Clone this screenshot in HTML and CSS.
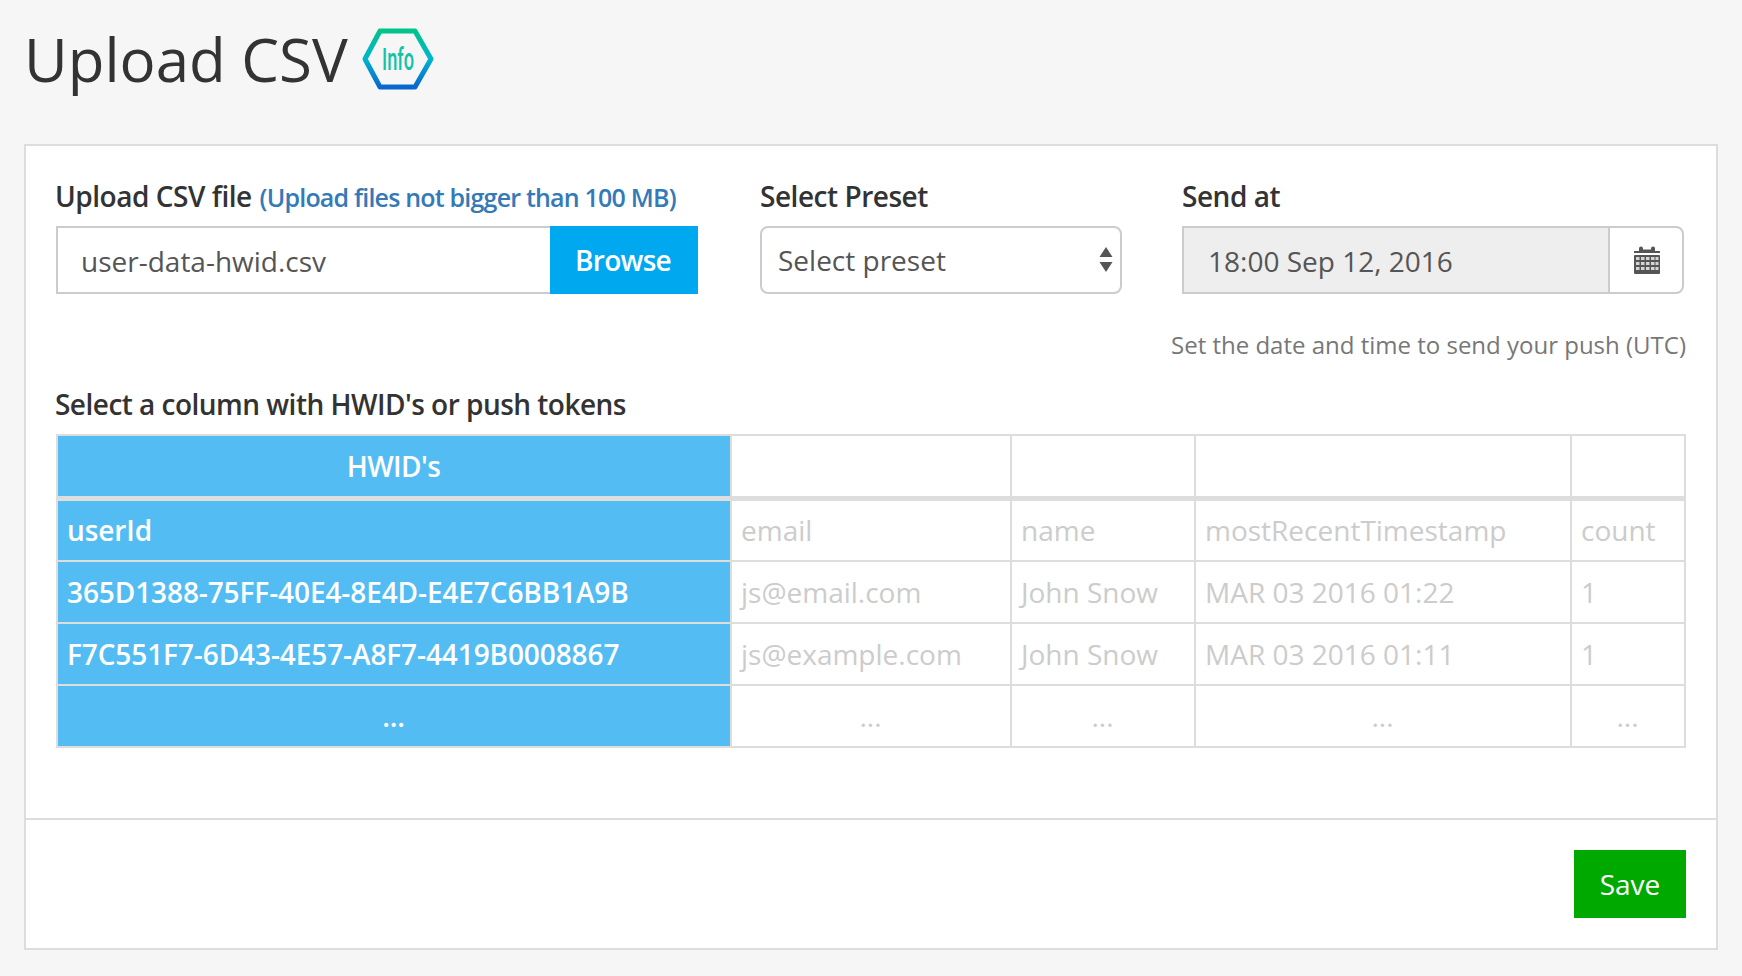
FILE: index.html
```html
<!DOCTYPE html>
<html lang="en">
<head>
<meta charset="utf-8">
<title>Upload CSV</title>
<link rel="stylesheet" href="styles.css">
</head>
<body>
<header class="page-head">
  <h1 class="title">Upload CSV</h1>
  <svg class="info-badge" width="72" height="64" viewBox="0 0 72 64" aria-label="Info">
    <defs>
      <linearGradient id="hex" x1="0" y1="0" x2="0" y2="1">
        <stop offset="0" stop-color="#00c48a"/>
        <stop offset="0.5" stop-color="#00b4cf"/>
        <stop offset="1" stop-color="#0a66cf"/>
      </linearGradient>
    </defs>
    <polygon points="3,32 18,4 53,4 69,32 53,60 18,60" fill="none" stroke="url(#hex)" stroke-width="5" stroke-linejoin="round"/>
    <text class="info-text" x="20" y="43" textLength="32" lengthAdjust="spacingAndGlyphs">Info</text>
  </svg>
</header>

<main class="panel">
  <div class="panel-body">
    <div class="fields">
      <div class="field field-file">
        <div class="label label-tight">Upload CSV file <span class="label-note">(Upload files not bigger than 100 MB)</span></div>
        <div class="file-group">
          <div class="file-name"><span class="nudge">user-data-hwid.csv</span></div>
          <div class="browse">Browse</div>
        </div>
      </div>
      <div class="field field-preset">
        <div class="label">Select Preset</div>
        <div class="select">
          <span>Select preset</span>
          <svg class="select-arrows" width="14" height="26" viewBox="0 0 14 26">
            <polygon points="7,0 13.5,10 .5,10" fill="#555"/>
            <polygon points="0.5,15 13.5,15 7,25" fill="#555"/>
          </svg>
        </div>
      </div>
      <div class="field field-date">
        <div class="label">Send at</div>
        <div class="date-group">
          <div class="date-value"><span class="nudge">18:00 Sep 12, 2016</span></div>
          <div class="date-btn">
            <svg width="26" height="28" viewBox="0 0 26 28">
              <path d="M0 7h5V4.500Q5 2.500 7 2.500Q9 2.500 9 4.500V5.500H17V4.500Q17 2.500 19 2.500Q21 2.500 21 4.500V7H26V9H0Z" fill="#555" transform="translate(0 -2)"/>
              <rect y="9" width="26" height="19" rx="1" fill="#555"/>
              <g class="cal-dots">
                <rect x="2" y="11" width="3.500" height="3"/><rect x="7" y="11" width="3.500" height="3"/><rect x="12" y="11" width="3.500" height="3"/><rect x="17" y="11" width="3.500" height="3"/><rect x="21.500" y="11" width="3" height="3"/>
                <rect x="2" y="16" width="3.500" height="3"/><rect x="7" y="16" width="3.500" height="3"/><rect x="12" y="16" width="3.500" height="3"/><rect x="17" y="16" width="3.500" height="3"/><rect x="21.500" y="16" width="3" height="3"/>
                <rect x="2" y="21" width="3.500" height="3"/><rect x="7" y="21" width="3.500" height="3"/><rect x="12" y="21" width="3.500" height="3"/><rect x="17" y="21" width="3.500" height="3"/><rect x="21.500" y="21" width="3" height="3"/>
              </g>
            </svg>
          </div>
        </div>
      </div>
    </div>
    <p class="hint">Set the date and time to send your push (UTC)</p>
    <div class="label label-tight table-label">Select a column with HWID's or push tokens</div>
    <table class="data">
      <colgroup>
        <col class="c1"><col class="c2"><col class="c3"><col class="c4"><col class="c5">
      </colgroup>
      <thead>
        <tr><th class="on">HWID's</th><th></th><th></th><th></th><th></th></tr>
      </thead>
      <tbody>
        <tr><td class="on">userId</td><td>email</td><td>name</td><td>mostRecentTimestamp</td><td>count</td></tr>
        <tr><td class="on">365D1388-75FF-40E4-8E4D-E4E7C6BB1A9B</td><td>js@email.com</td><td>John Snow</td><td>MAR 03 2016 01:22</td><td>1</td></tr>
        <tr><td class="on">F7C551F7-6D43-4E57-A8F7-4419B0008867</td><td>js@example.com</td><td>John Snow</td><td>MAR 03 2016 01:11</td><td>1</td></tr>
        <tr class="more"><td class="on">...</td><td>...</td><td>...</td><td>...</td><td>...</td></tr>
      </tbody>
    </table>
  </div>
  <footer class="panel-foot">
    <div class="save">Save</div>
  </footer>
</main>
</body>
</html>
```
FILE: styles.css
```css
* { box-sizing: border-box; }
html, body { margin: 0; height: 100%; }
body {
  background: #f6f6f6;
  color: #333;
  font-family: "Open Sans", "Noto Sans", sans-serif;
  padding: 0 24px;
  overflow: hidden;
}
.page-head {
  display: flex;
  align-items: center;
  gap: 14px;
  height: 144px;
  padding-bottom: 26px;
}
.title {
  margin: 0;
  font-size: 60px;
  font-weight: 400;
  line-height: 76px;
  color: #333;
}
.info-badge { display: block; overflow: visible; }
.info-text {
  font-family: "Roboto", sans-serif;
  font-size: 32px;
  font-weight: 500;
  fill: #12c2a6;
}
.panel {
  width: 1694px;
  height: 806px;
  background: #fff;
  border: 2px solid #ddd;
  display: flex;
  flex-direction: column;
}
.panel-body {
  flex: 1;
  padding: 30px 30px 0;
}
.fields { display: flex; }
.field-file { width: 642px; margin-right: 62px; }
.field-preset { width: 362px; margin-right: 60px; }
.field-date { width: 502px; }
.label {
  font-size: 28px;
  font-weight: 600;
  line-height: 40px;
  letter-spacing: -0.47px;
  color: #333;
  height: 50px;
}
.label-tight { text-indent: -1px; }
.label-note {
  font-size: 25px;
  font-weight: 600;
  letter-spacing: -0.8px;
  margin-left: 1px;
  color: #337ab7;
}
.file-group, .select, .date-group {
  display: flex;
  height: 68px;
  font-size: 28px;
  color: #555;
}
.file-name {
  flex: 1;
  display: flex;
  align-items: center;
  padding-left: 23px;
  border: 2px solid #ccc;
  border-right: 0;
  background: #fff;
}
.nudge { padding-top: 2px; }
.browse {
  width: 148px;
  display: flex;
  align-items: center;
  justify-content: center;
  padding-right: 2px;
  background: #00a8f0;
  color: #fff;
  font-weight: 600;
  letter-spacing: -0.7px;
}
.select {
  align-items: center;
  justify-content: space-between;
  padding: 0 7px 0 16px;
  border: 2px solid #ccc;
  border-radius: 8px;
  background: #fff;
}
.select-arrows { display: block; }
.date-group {
  border: 2px solid #ccc;
  border-radius: 0 8px 8px 0;
}
.date-value {
  flex: 1;
  display: flex;
  align-items: center;
  padding-left: 24px;
  background: #eee;
}
.date-btn {
  width: 74px;
  display: flex;
  align-items: center;
  justify-content: center;
  padding-left: 2px;
  border-left: 2px solid #ccc;
}
.cal-dots rect { fill: #fff; opacity: .75; }
.hint {
  margin: 34px 0 0;
  text-align: right;
  font-size: 24px;
  line-height: 34px;
  color: #777;
}
.table-label {
  margin-top: 22px;
  height: 50px;
  letter-spacing: -0.52px;
}
.data {
  width: 1628px;
  border-collapse: collapse;
  table-layout: fixed;
  font-size: 28px;
}
.c1 { width: 674px; }
.c2 { width: 280px; }
.c3 { width: 184px; }
.c4 { width: 376px; }
.c5 { width: 114px; }
.data th, .data td {
  border: 2px solid #ddd;
  height: 62px;
  padding: 0 10px 0 9px;
  color: #ccc;
  font-weight: 400;
  white-space: nowrap;
  overflow: hidden;
}
.data thead th { border-bottom-width: 5px; height: 63px; }
.data tbody tr:first-child td { height: 63px; }
.data .on {
  background: #53bcf3;
  color: #fff;
  font-weight: 600;
  letter-spacing: -0.1px;
}
.data th.on {
  text-align: center;
  font-size: 28px;
  font-weight: 600;
  letter-spacing: -0.6px;
}
.more td { text-align: center; }
.panel-foot {
  height: 130px;
  border-top: 2px solid #ddd;
  padding: 30px 30px 0;
  display: flex;
  justify-content: flex-end;
}
.save {
  width: 112px;
  height: 68px;
  display: flex;
  align-items: center;
  justify-content: center;
  background: #00a900;
  color: #fff;
  font-size: 28px;
}
```
